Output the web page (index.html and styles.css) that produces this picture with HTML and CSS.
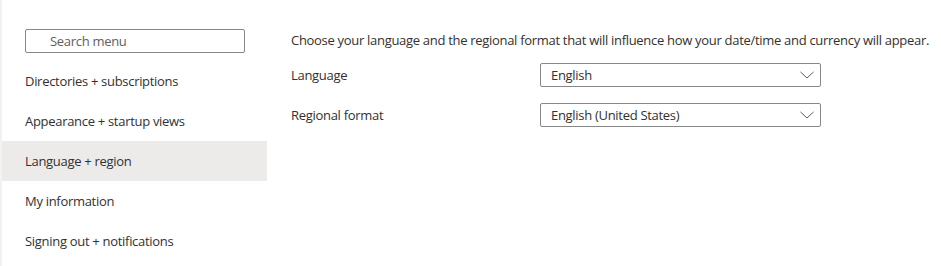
FILE: index.html
```html
<!DOCTYPE html>
<html lang="en">
<head>
    <meta charset="UTF-8">
    <title>Settings</title>
    <link rel="stylesheet" href="styles.css">
</head>
<body>
    <div class="settings">
        <nav class="menu">
            <div class="search">
                <input class="search-input" type="text" placeholder="Search menu">
            </div>
            <div class="menu-item">Directories + subscriptions</div>
            <div class="menu-item">Appearance + startup views</div>
            <div class="menu-item active">Language + region</div>
            <div class="menu-item">My information</div>
            <div class="menu-item">Signing out + notifications</div>
        </nav>

        <main class="content">
            <p class="intro">Choose your language and the regional format that will influence how your date/time and currency will appear.</p>
            <div class="field">
                <label class="field-label">Language</label>
                <div class="dropdown">
                    <span>English</span>
                    <svg class="chevron" width="16" height="16" viewBox="0 0 16 16">
                        <path d="M1.5 5 L8 11 L14.5 5" fill="none" stroke="#605e5c" stroke-width="1"/>
                    </svg>
                </div>
            </div>
            <div class="field">
                <label class="field-label">Regional format</label>
                <div class="dropdown">
                    <span>English (United States)</span>
                    <svg class="chevron" width="16" height="16" viewBox="0 0 16 16">
                        <path d="M1.5 5 L8 11 L14.5 5" fill="none" stroke="#605e5c" stroke-width="1"/>
                    </svg>
                </div>
            </div>
        </main>
    </div>
</body>
</html>
```

FILE: styles.css
```css
body {
    margin: 0;
    background-color: #fff;
    font-family: 'Open Sans', sans-serif;
    font-size: 13px;
    letter-spacing: -0.3px;
    color: #323130;
}

.settings {
    display: flex;
    height: 266px;
    white-space: nowrap;
}

.menu {
    width: 265px;
    flex-shrink: 0;
    border-left: 2px solid #f3f2f1;
    padding-top: 29px;
}

.search {
    padding: 0 22px 0 23px;
    margin-bottom: 8px;
}

.search-input {
    box-sizing: border-box;
    width: 220px;
    height: 24px;
    border: 1px solid #8a8886;
    border-radius: 2px;
    padding: 0 0 0 24px;
    font-family: 'Open Sans', sans-serif;
    font-size: 13px;
    letter-spacing: -0.3px;
    color: #323130;
    outline: none;
}

.search-input::placeholder {
    color: #605e5c;
}

.menu-item {
    height: 40px;
    display: flex;
    align-items: center;
    padding-left: 23px;
}

.menu-item.active {
    background-color: #edebe9;
}

.content {
    flex: 1;
    padding: 28px 0 0 24px;
}

.intro {
    margin: 0 0 11px;
    line-height: 24px;
}

.field {
    display: flex;
    align-items: center;
    height: 24px;
    margin-bottom: 16px;
}

.field-label {
    width: 249px;
}

.dropdown {
    box-sizing: border-box;
    width: 281px;
    height: 24px;
    border: 1px solid #8a8886;
    border-radius: 2px;
    display: flex;
    align-items: center;
    justify-content: space-between;
    padding: 0 5px 0 10px;
}

.chevron {
    display: block;
}
```
